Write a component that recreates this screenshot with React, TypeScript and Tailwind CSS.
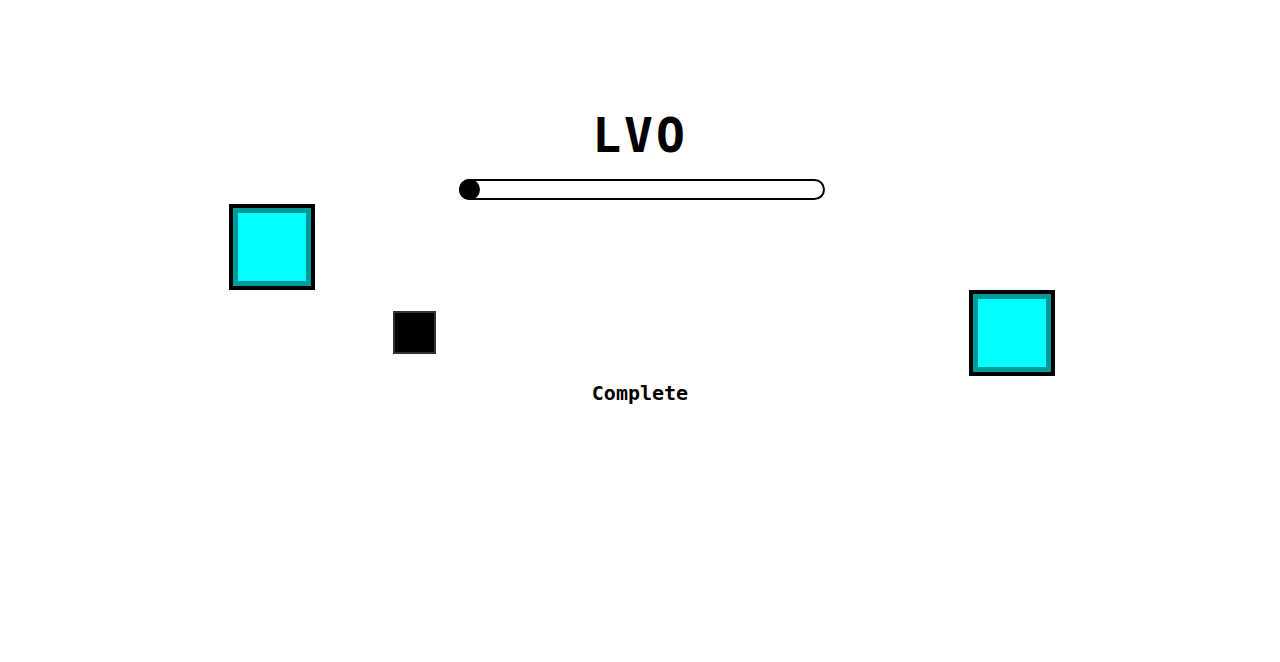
const pixel = { fontFamily: '"DejaVu Sans Mono", "Liberation Mono", monospace' };

function Crate({ className }: { className: string }) {
  return (
    <div
      className={`absolute h-[86px] w-[86px] border-4 border-black bg-[#00ffff] shadow-[inset_0_0_0_5px_#009a9a] ${className}`}
    />
  );
}

export default function App() {
  return (
    <div className="relative h-[662px] w-full overflow-hidden bg-white" style={pixel}>
      <Crate className="left-[229px] top-[204px]" />
      <Crate className="left-[969px] top-[290px]" />
      <div className="absolute left-[393px] top-[311px] h-[43px] w-[43px] border-2 border-[#333] bg-black" />

      <div className="flex flex-col items-center pt-[111px]">
        <h1 className="text-[48px] font-bold leading-none tracking-[3px] text-black">LVO</h1>
        <div className="relative ml-[4px] mt-5 h-[21px] w-[366px] rounded-full border-2 border-black">
          <div className="absolute -left-[2px] -top-[2px] h-[21px] w-[21px] rounded-full bg-black" />
        </div>
        <p className="mt-[183px] text-[20px] font-bold leading-none text-black">Complete</p>
      </div>
    </div>
  );
}
